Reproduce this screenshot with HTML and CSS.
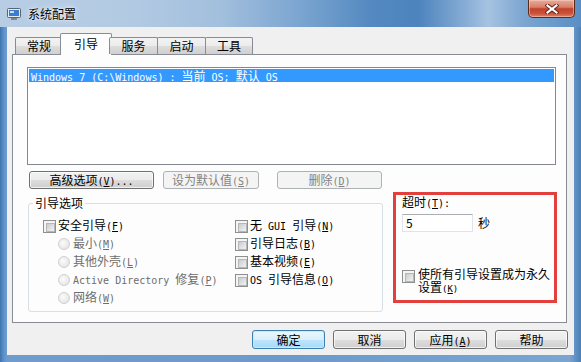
FILE: index.html
```html
<!DOCTYPE html>
<html lang="zh-CN">
<head>
<meta charset="utf-8">
<title>系统配置</title>
<link rel="stylesheet" href="styles.css">
</head>
<body>
<div class="window">
  <div class="titlebar">
    <svg class="appicon" width="14" height="13" viewBox="0 0 14 13">
      <rect x="0.5" y="0.5" width="13" height="9" rx="1" fill="#e4eaf1" stroke="#5a6472"/>
      <rect x="2" y="2" width="10" height="6" fill="#3b7bd0"/>
      <rect x="3" y="3" width="4" height="2" fill="#bfe0ff"/>
      <rect x="4" y="10" width="6" height="2" fill="#7b8794"/>
    </svg>
    <span class="title">系统配置</span>
    <div class="close">
      <svg width="14" height="10" viewBox="0 0 14 10">
        <path d="M2.5 1.5 L11.5 8.5 M11.5 1.5 L2.5 8.5" stroke="#5a2117" stroke-width="4" stroke-linecap="square"/>
        <path d="M2.5 1.5 L11.5 8.5 M11.5 1.5 L2.5 8.5" stroke="#ffffff" stroke-width="2.2" stroke-linecap="square"/>
      </svg>
    </div>
  </div>
  <div class="client">
    <div class="tabs">
      <div class="tab t1">常规</div>
      <div class="tab active">引导</div>
      <div class="tab t3">服务</div>
      <div class="tab t4">启动</div>
      <div class="tab t5">工具</div>
    </div>
    <div class="panel">
      <div class="listbox">
        <div class="row sel"><span class="mo">Windows 7 (C:\Windows) : </span>当前<span class="mo"> OS; </span>默认<span class="mo"> OS</span></div>
      </div>
      <div class="btnrow">
        <button class="btn w1">高级选项<span class="mn">(<u>V</u>)...</span></button>
        <button class="btn dis w2">设为默认值<span class="mn">(<u>S</u>)</span></button>
        <button class="btn dis w3">删除<span class="mn">(<u>D</u>)</span></button>
      </div>
      <div class="lower">
        <fieldset class="group">
          <legend>引导选项</legend>
          <div class="cols">
            <div class="col">
              <div class="opt"><span class="cb"></span><span class="lbl">安全引导<span class="mn">(<u>F</u>)</span></span></div>
              <div class="opt sub dis"><span class="rb"></span><span class="lbl">最小<span class="mn">(<u>M</u>)</span></span></div>
              <div class="opt sub dis"><span class="rb"></span><span class="lbl">其他外壳<span class="mn">(<u>L</u>)</span></span></div>
              <div class="opt sub dis"><span class="rb"></span><span class="lbl"><span class="mo">Active Directory </span>修复<span class="mn">(<u>P</u>)</span></span></div>
              <div class="opt sub dis"><span class="rb"></span><span class="lbl">网络<span class="mn">(<u>W</u>)</span></span></div>
            </div>
            <div class="col">
              <div class="opt"><span class="cb"></span><span class="lbl">无<span class="mo"> GUI </span>引导<span class="mn">(<u>N</u>)</span></span></div>
              <div class="opt"><span class="cb"></span><span class="lbl">引导日志<span class="mn">(<u>B</u>)</span></span></div>
              <div class="opt"><span class="cb"></span><span class="lbl">基本视频<span class="mn">(<u>E</u>)</span></span></div>
              <div class="opt"><span class="cb"></span><span class="lbl"><span class="mo">OS </span>引导信息<span class="mn">(<u>O</u>)</span></span></div>
            </div>
          </div>
        </fieldset>
        <div class="timeout">
          <div class="tlabel">超时<span class="mn">(<u>T</u>):</span></div>
          <div class="trow">
            <div class="tinput">5</div>
            <span class="unit">秒</span>
          </div>
          <div class="perm">
            <span class="cb"></span>
            <span class="ptext">使所有引导设置成为永久<br>设置<span class="pm">(<u>K</u>)</span></span>
          </div>
        </div>
      </div>
    </div>
    <div class="footer">
      <button class="btn fb def">确定</button>
      <button class="btn fb">取消</button>
      <button class="btn fb">应用<span class="mn">(<u>A</u>)</span></button>
      <button class="btn fb">帮助</button>
    </div>
  </div>
</div>
</body>
</html>
```

FILE: styles.css
```css
* { box-sizing: border-box; }
html, body { margin: 0; padding: 0; }
body {
  width: 581px; height: 362px; overflow: hidden;
  font-family: "Noto Sans CJK SC", "DejaVu Sans", sans-serif;
  font-size: 12px; color: #000;
}
.window {
  width: 581px; height: 362px;
  display: flex; flex-direction: column;
  background: linear-gradient(90deg, #3d74b0 0, #5f93c9 4px, #6e9dcd 7px, #6b9acb 50%, #7aa5d1 98%, #4a7fb8 100%);
}
.titlebar {
  height: 27px; flex: none;
  display: flex; align-items: center;
  padding-left: 7px;
  background: linear-gradient(90deg, #b7cde4 0%, #b3cae3 22%, #a2bfdd 38%, #7aa4d0 52%, #5389c0 64%, #4d84bd 72%, #86acd5 80%, #a6c3e1 84%, #7da6d0 90%, #5a8ec5 100%);
}
.appicon { flex: none; margin-top: 1px; }
.title {
  margin-left: 7px; line-height: 14px;
  text-shadow: 0 0 6px rgba(255,255,255,0.9), 0 0 2px rgba(255,255,255,0.9);
}
.close {
  margin-left: auto; margin-right: 6px; align-self: flex-start;
  width: 47px; height: 18px;
  border: 1px solid #5e2a20; border-top: none;
  border-radius: 0 0 5px 5px;
  background: linear-gradient(#e7ab9c 0%, #d98068 42%, #c4412a 52%, #c9513a 78%, #dd8266 100%);
  box-shadow: inset 0 0 0 1px rgba(255,220,210,0.45);
  display: flex; align-items: center; justify-content: center;
}
.client {
  flex: 1;
  margin: 0 7px 7px;
  background: #f0f0f0;
  padding: 6px 7px 0 5px;
  display: flex; flex-direction: column;
}
.tabs {
  display: flex; align-items: flex-end;
  height: 21px; padding-left: 3px;
  position: relative; z-index: 1;
}
.tab {
  height: 17px; width: 48px; margin-right: -1px;
  border: 1px solid #898c95; border-bottom: none;
  border-radius: 2px 2px 0 0;
  background: linear-gradient(#f3f3f3 0%, #ebebeb 50%, #dddddd 51%, #d0d0d0 100%);
  text-align: center; line-height: 16px;
}
.tab.t3, .tab.t4 { width: 49px; }
.tab.active {
  height: 22px; width: 52px;
  margin: 0 -3px -1px -2px;
  background: #fdfdfd;
  line-height: 19px;
}
.panel {
  height: 269px;
  border: 1px solid #898c95;
  background: #fdfdfd;
  padding: 12px 0 0 14px;
}
.mo { font-family: "DejaVu Sans Mono", "Liberation Mono", monospace; font-size: 10px; }
.mn, .pm { font-family: "DejaVu Sans Mono", "Liberation Mono", monospace; font-size: 10px; }
.listbox {
  width: 529px; height: 98px;
  border: 1px solid #828790;
  background: #fff;
  padding: 1px;
}
.row {
  height: 13px; width: 525px;
  line-height: 13px; padding-left: 2px;
  white-space: pre;
  font-family: "Noto Sans CJK SC", sans-serif; font-size: 12px;
}
.row.sel { background: #3399ff; color: #fff; }
.btnrow {
  display: flex; margin-top: 6px; padding-left: 2px; height: 18px;
}
.btn {
  height: 18px; padding: 0; margin: 0;
  border: 1px solid #707070; border-radius: 3px;
  background: linear-gradient(#f2f2f2 0%, #ebebeb 50%, #dddddd 51%, #cfcfcf 100%);
  box-shadow: inset 0 0 0 1px rgba(255,255,255,0.7);
  font-family: "Noto Sans CJK SC", sans-serif; font-size: 12px;
  line-height: 16px; color: #000; text-align: center;
}
.btn.dis {
  border-color: #adb2b5;
  background: #f4f4f4;
  box-shadow: none;
  color: #838383;
}
.w1 { width: 125px; }
.w2 { width: 96px; margin-left: 9px; }
.w3 { width: 105px; margin-left: 18px; }
.lower {
  display: flex; align-items: flex-start;
  margin-top: 3px;
}
.group {
  margin: 4px 0 0 1px; padding: 0;
  width: 355px; height: 116px; min-width: 0;
  border: 1px solid #d5dfe5; border-radius: 3px;
}
.group legend {
  margin-left: 4px; padding: 0 2px;
  line-height: 14px; font-size: 12px;
}
.cols {
  display: grid; grid-template-columns: 192px auto;
  padding: 7px 0 0 14px;
}
.opt {
  height: 18px; display: flex; align-items: center;
}
.opt .lbl { margin-left: 2px; line-height: 14px; white-space: nowrap; }
.opt.sub { padding-left: 15px; }
.opt.sub .lbl { margin-left: 3px; }
.opt.dis { color: #6d6d6d; }
.cb {
  flex: none;
  width: 13px; height: 13px;
  border: 1px solid #8e8f8f;
  background: #f4f4f4;
  padding: 2px;
  display: inline-block;
}
.cb::after {
  content: ""; display: block;
  width: 7px; height: 7px;
  border: 1px solid #b4b7bb;
  background: linear-gradient(135deg, #c9cbcd 0%, #e2e3e4 60%, #f1f1f1 100%);
}
.rb {
  flex: none;
  width: 12px; height: 12px; border-radius: 50%;
  border: 1px solid #cfd0d1;
  background: radial-gradient(circle at 40% 40%, #fbfbfb 0%, #ececec 55%, #dcdcdc 100%);
  display: inline-block;
}
.timeout {
  width: 164px; height: 111px; margin-left: 10px;
  border: 3px solid #e3403d;
  padding: 0 0 0 6px;
  display: flex; flex-direction: column;
}
.tlabel { line-height: 14px; }
.trow { display: flex; align-items: center; margin-top: 3px; }
.tinput {
  width: 71px; height: 18px;
  border: 1px solid #e2e3ea; border-top-color: #abadb3;
  background: #fff;
  padding-left: 3px; line-height: 16px;
}
.unit { margin-left: 5px; line-height: 14px; }
.perm {
  margin-top: auto; padding-bottom: 4px;
  display: flex; align-items: flex-start;
}
.perm .cb { margin-top: 1px; }
.ptext {
  margin-left: 3px; line-height: 13px; white-space: nowrap;
  font-family: "Liberation Sans", "Noto Sans CJK SC", sans-serif;
}
.pm { font-size: 9px; }
.footer {
  display: flex; justify-content: flex-end; gap: 8px;
  margin-top: 7px; margin-right: -1px;
}
.btn.fb { width: 73px; height: 19px; line-height: 17px; }
.btn.def {
  border-color: #3c7fb1;
  background: linear-gradient(#eaf6fd 0%, #d9f0fc 50%, #bee6fd 51%, #a7d9f5 100%);
  box-shadow: inset 0 0 0 1px #c4ebff;
}
```
